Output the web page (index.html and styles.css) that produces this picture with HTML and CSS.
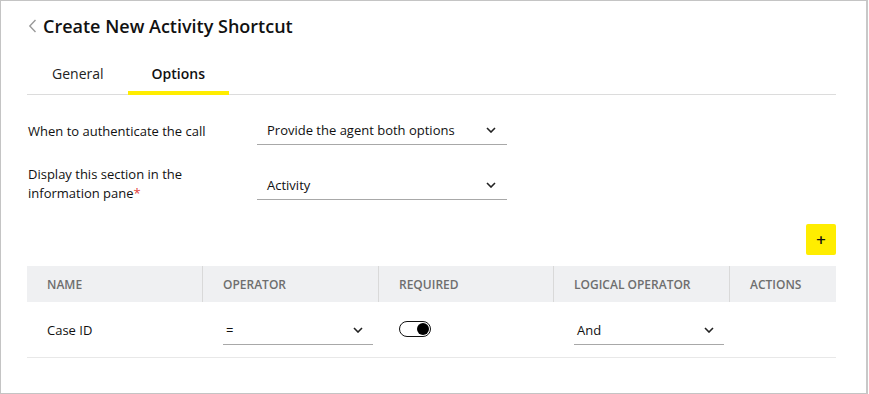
FILE: index.html
```html
<!DOCTYPE html>
<html>
<head>
<meta charset="utf-8">
<link rel="stylesheet" href="styles.css">
</head>
<body>
<div class="frame">
  <div class="page">
    <div class="title-row">
      <svg class="back" width="9" height="14" viewBox="0 0 9 14"><path d="M7.5 1 L1.8 7 L7.5 13" fill="none" stroke="#9a9a9a" stroke-width="1.4"/></svg>
      <h1 class="title">Create New Activity Shortcut</h1>
    </div>
    <div class="tabs">
      <div class="tab">General</div>
      <div class="tab active">Options</div>
    </div>
    <div class="form">
      <div class="form-row">
        <div class="label single">When to authenticate the call</div>
        <div class="select wide"><span>Provide the agent both options</span><svg class="chev" width="10" height="6" viewBox="0 0 10 6"><path d="M1 1 L5 5 L9 1" fill="none" stroke="#222" stroke-width="1.6"/></svg></div>
      </div>
      <div class="form-row">
        <div class="label">Display this section in the<br>information pane<span class="req">*</span></div>
        <div class="select wide"><span>Activity</span><svg class="chev" width="10" height="6" viewBox="0 0 10 6"><path d="M1 1 L5 5 L9 1" fill="none" stroke="#222" stroke-width="1.6"/></svg></div>
      </div>
    </div>
    <div class="toolbar"><button class="add">+</button></div>
    <div class="table">
      <div class="thead">
        <div class="th">NAME</div>
        <div class="th">OPERATOR</div>
        <div class="th">REQUIRED</div>
        <div class="th">LOGICAL OPERATOR</div>
        <div class="th">ACTIONS</div>
      </div>
      <div class="trow">
        <div class="td">Case ID</div>
        <div class="td"><div class="select narrow"><span>=</span><svg class="chev" width="10" height="6" viewBox="0 0 10 6"><path d="M1 1 L5 5 L9 1" fill="none" stroke="#222" stroke-width="1.6"/></svg></div></div>
        <div class="td"><div class="toggle"><div class="knob"></div></div></div>
        <div class="td"><div class="select narrow"><span>And</span><svg class="chev" width="10" height="6" viewBox="0 0 10 6"><path d="M1 1 L5 5 L9 1" fill="none" stroke="#222" stroke-width="1.6"/></svg></div></div>
        <div class="td"></div>
      </div>
    </div>
  </div>
</div>
</body>
</html>
```

FILE: styles.css
```css
* { box-sizing: border-box; }
html, body { margin: 0; padding: 0; background: #fff; }
body { font-family: "Open Sans", "Noto Sans", sans-serif; color: #111; }
.frame {
  width: 868px;
  height: 394px;
  border: 1px solid #c4c4c4;
  border-right: 2px solid #c8c8c8;
}
.page { padding: 12px 30px 0 26px; }
.title-row { display: flex; align-items: center; height: 26px; }
.back { margin-left: 1px; margin-right: 6px; }
.title { font-size: 18px; font-weight: 600; margin: 0; line-height: 26px; color: #111; }
.tabs {
  display: flex;
  margin-top: 18px;
  border-bottom: 1px solid #dcdcdc;
  padding-left: 1px;
}
.tab {
  font-size: 14px;
  padding: 0 24px;
  height: 38px;
  line-height: 34px;
  color: #222;
  border-bottom: 4px solid transparent;
  margin-bottom: -1px;
}
.tab.active { font-weight: 600; border-bottom-color: #ffed00; color: #111; }
.form { margin-top: 19px; padding-left: 1px; display: flex; flex-direction: column; gap: 20px; }
.form-row { display: flex; align-items: center; }
.label { width: 229px; font-size: 13px; line-height: 19px; color: #111; }
.label.single { padding-top: 3px; }
.req { color: #e0403a; }
.select {
  display: flex;
  align-items: center;
  justify-content: space-between;
  height: 31px;
  border-bottom: 1px solid #a8a8a8;
  font-size: 13px;
  padding: 2px 0 0 10px;
  color: #111;
}
.select.wide { width: 250px; padding-right: 11px; }
.select.narrow { width: 150px; padding-left: 3px; padding-right: 10px; }
.toolbar { display: flex; justify-content: flex-end; margin-top: 21px; }
.add {
  width: 30px; height: 31px;
  border: none; border-radius: 2px;
  background: #ffed00;
  font-family: "DejaVu Sans", sans-serif;
  font-size: 13px; font-weight: 600; color: #111;
  padding: 0; line-height: 31px;
}
.table { margin-top: 11px; }
.thead, .trow { display: grid; grid-template-columns: 175px 176px 175px 176px 1fr; }
.thead { background: #eff0f2; height: 36px; }
.th {
  font-size: 12px; font-weight: 600; color: #6e6e6e;
  display: flex; align-items: center;
  padding-left: 20px;
  border-left: 1px solid #d9d9d9;
}
.th:first-child { border-left: none; }
.trow { height: 56px; border-bottom: 1px solid #e8e8e8; }
.td { display: flex; align-items: center; padding-left: 21px; font-size: 13px; color: #111; }
.td:first-child { padding-left: 20px; }
.toggle {
  width: 32px; height: 16px;
  border: 1.5px solid #111; border-radius: 8px;
  display: flex; align-items: center; justify-content: flex-end;
  padding-right: 1px; margin-top: -2px;
}
.knob { width: 12px; height: 12px; border-radius: 50%; background: #000; }
```
